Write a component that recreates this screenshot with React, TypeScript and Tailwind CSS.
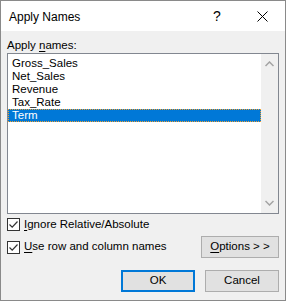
import React from 'react';

const items = ['Gross_Sales', 'Net_Sales', 'Revenue', 'Tax_Rate', 'Term'];

function Check() {
  return (
    <span className="w-[13px] h-[13px] border border-[#333333] bg-white flex items-center justify-center shrink-0">
      <svg width="11" height="11" viewBox="0 0 11 11">
        <path d="M1.5 5.5 L4.2 8.2 L9.5 2.5" fill="none" stroke="#333333" strokeWidth="1.2" />
      </svg>
    </span>
  );
}

function Btn({ children, focused, w }: { children: React.ReactNode; focused?: boolean; w: string }) {
  return (
    <button
      className={
        'h-[22px] bg-[#e1e1e1] flex items-center justify-center text-black ' +
        w +
        (focused ? ' border-2 border-[#0078d7]' : ' border border-[#adadad]')
      }
    >
      {children}
    </button>
  );
}

export default function App() {
  return (
    <div
      className="w-[286px] h-[301px] border border-[#8a8a8a] bg-[#f0f0f0] flex flex-col text-[11.5px] text-black"
      style={{ fontFamily: '"Liberation Sans", Arial, sans-serif' }}
    >
      {/* title bar */}
      <div className="h-[30px] bg-white flex items-center pl-[8px] shrink-0 text-[12px]">
        <span className="flex-1 pt-[1px]">Apply Names</span>
        <span className="w-[14px] text-[14px] mr-[30px] pt-[1px]">?</span>
        <svg width="11" height="11" viewBox="0 0 11 11" className="mr-[17px]">
          <path d="M0.5 0.5 L10.5 10.5 M10.5 0.5 L0.5 10.5" stroke="#000" strokeWidth="1" />
        </svg>
      </div>

      <div className="flex flex-col px-[6px]">
        <div className="pt-[7px] h-[21px] leading-[14px]">
          Apply <span className="underline underline-offset-2">n</span>ames:
        </div>

        {/* list box */}
        <div className="mt-[1px] h-[161px] border border-[#828790] bg-white flex">
          <div className="flex-1 pt-[3px]">
            {items.map((it) => (
              <div
                key={it}
                className={
                  'h-[13px] leading-[13px] pl-[4px] ' +
                  (it === 'Term'
                    ? 'bg-[#0078d7] text-white outline-1 outline-dotted outline-[#f0a030] -outline-offset-1'
                    : '')
                }
              >
                {it}
              </div>
            ))}
          </div>
          <div className="w-[17px] bg-[#f0f0f0] flex flex-col justify-between items-center py-[7px]">
            <svg width="9" height="6" viewBox="0 0 9 6">
              <path d="M0.5 5 L4.5 1 L8.5 5" fill="none" stroke="#a3a3a3" strokeWidth="1.5" />
            </svg>
            <svg width="9" height="6" viewBox="0 0 9 6">
              <path d="M0.5 1 L4.5 5 L8.5 1" fill="none" stroke="#a3a3a3" strokeWidth="1.5" />
            </svg>
          </div>
        </div>

        <div className="mt-[4px] h-[13px] flex items-center gap-[4px]">
          <Check />
          <span>
            <span className="underline underline-offset-2">I</span>gnore Relative/Absolute
          </span>
        </div>

        <div className="mt-[5px] h-[22px] flex items-center">
          <Check />
          <span className="ml-[4px] flex-1">
            <span className="underline underline-offset-2">U</span>se row and column names
          </span>
          <Btn w="w-[78px]">
            <span>
              <span className="underline underline-offset-2">O</span>ptions &gt; &gt;
            </span>
          </Btn>
        </div>

        <div className="mt-[12px] flex justify-end gap-[10px]">
          <Btn w="w-[74px]" focused>
            OK
          </Btn>
          <Btn w="w-[74px]">Cancel</Btn>
        </div>
      </div>
    </div>
  );
}
